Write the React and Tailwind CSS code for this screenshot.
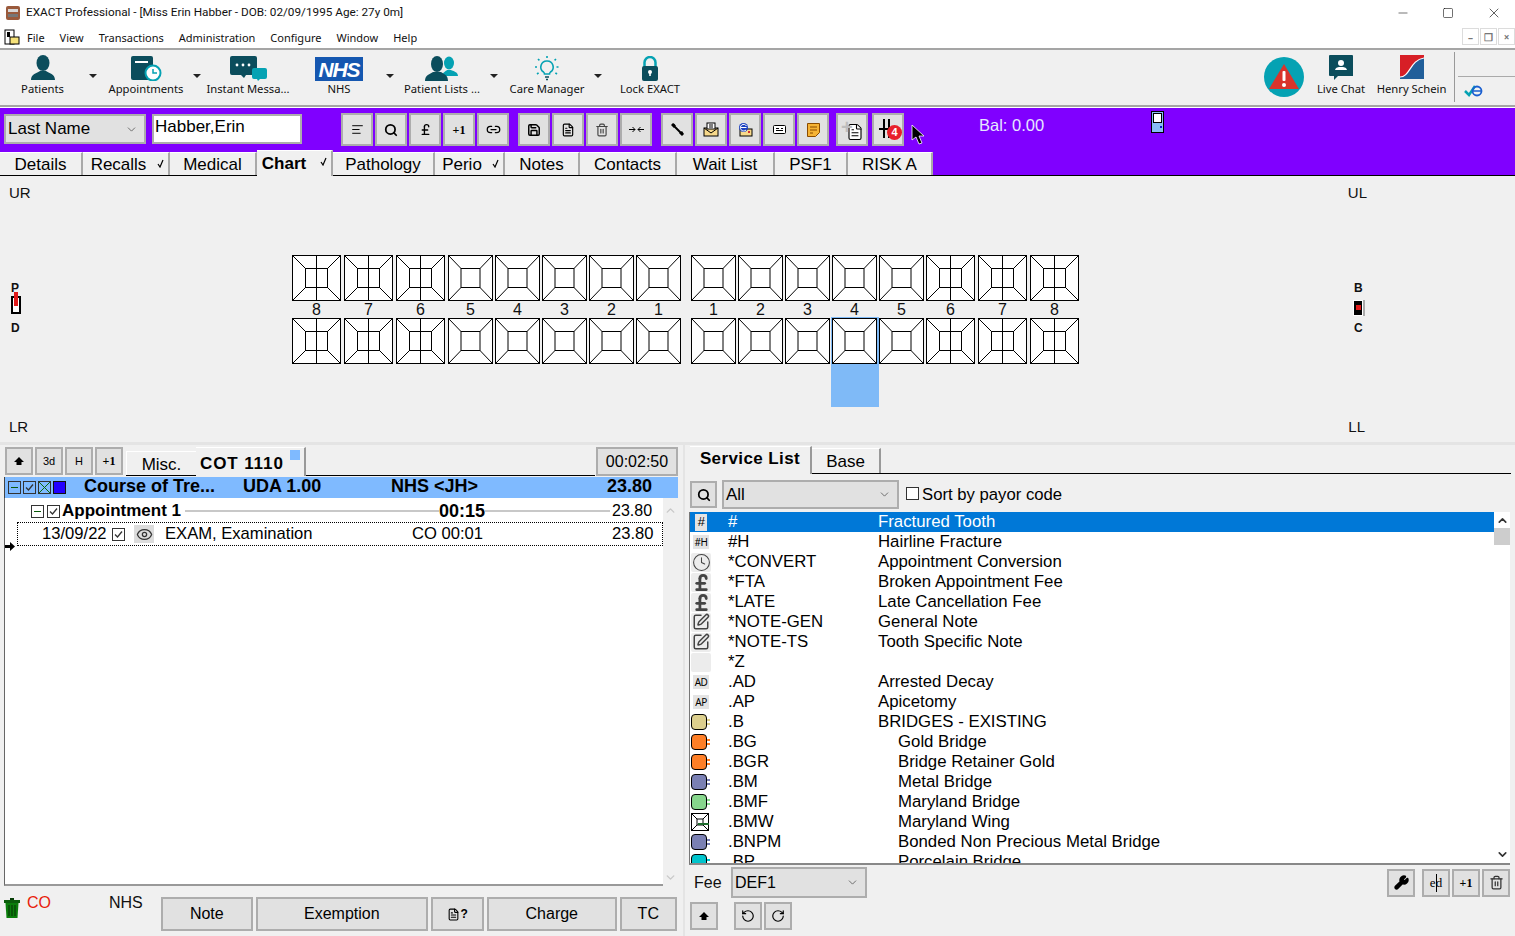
import React from 'react';
import { AlignLeft, Search, PoundSterling, Link2, Save, FileText, Trash2, Minus, Square, X, ChevronDown, ChevronUp, Clock, SquarePen, Eye, Wrench, RotateCcw, RotateCw } from 'lucide-react';

const UI = "font-['Noto_Sans',sans-serif]";
const AR = "font-['Liberation_Sans',Arial,sans-serif]";

const Btn = ({ className = '', children }) => (
  <div className={`flex items-center justify-center shrink-0 border-2 border-[#adadad] bg-[#e1e1e1] text-black ${className}`}>{children}</div>
);

const Caret = () => <div className="w-0 h-0 border-x-[4px] border-x-transparent border-t-[4px] border-t-[#222]" />;

const Select = ({ className = '', children }) => (
  <div className={`flex items-center justify-between border-2 border-[#adadad] bg-[#e1e1e1] pl-[2px] pr-1.5 text-black ${className}`}>
    <span>{children}</span>
    <ChevronDown size={13} strokeWidth={1.5} className="text-[#555]" />
  </div>
);

const Patient = () => (
  <svg width="26" height="26" viewBox="0 0 26 26" fill="#0b4d5c"><ellipse cx="13" cy="8" rx="6.5" ry="8" /><path d="M1 25c0-6 6-7 9-9h6c3 2 9 3 9 9z" /></svg>
);
const Appt = () => (
  <svg width="32" height="26" viewBox="0 0 32 26"><rect x="1" y="1" width="22" height="24" rx="2" fill="#0b4d5c" /><rect x="5" y="6" width="13" height="2" fill="#fff" /><circle cx="23" cy="18" r="7.5" fill="#fff" stroke="#05a2b3" strokeWidth="2" /><path d="M23 14v4h4" stroke="#05a2b3" strokeWidth="1.5" fill="none" /></svg>
);
const Chat = () => (
  <svg width="37" height="25" viewBox="0 0 37 25"><path d="M2 0h23a2 2 0 0 1 2 2v17H16l-2 3-3-3H2a2 2 0 0 1-2-2V2a2 2 0 0 1 2-2z" fill="#0b4d5c" /><circle cx="7" cy="9" r="1.4" fill="#fff" /><circle cx="13" cy="9" r="1.4" fill="#fff" /><circle cx="19" cy="9" r="1.4" fill="#fff" /><path d="M24 12h11a2 2 0 0 1 2 2v7a2 2 0 0 1-2 2h-5l-2 2-1-2h-3a2 2 0 0 1-2-2v-7a2 2 0 0 1 2-2z" fill="#05a2b3" /></svg>
);
const Nhs = () => (
  <div className="w-[48px] h-[24px] bg-[#1557b0] flex items-center justify-center text-white text-[21px] italic font-bold font-['Liberation_Sans',sans-serif] leading-none tracking-tighter">NHS</div>
);
const Lists = () => (
  <svg width="34" height="25" viewBox="0 0 34 25"><ellipse cx="24" cy="7" rx="5" ry="6.5" fill="#05a2b3" /><path d="M17 20c1-4 4-5 5-6h4c2 1 7 2 7 6z" fill="#05a2b3" /><ellipse cx="12" cy="8" rx="6" ry="8" fill="#0b4d5c" /><path d="M0 25c0-6 5-7 8-9h8c3 2 7 3 7 9z" fill="#0b4d5c" /></svg>
);
const Bulb = () => (
  <svg width="24" height="25" viewBox="0 0 24 25" fill="none" stroke="#05a2b3" strokeWidth="1.6"><path d="M12 5a6 6 0 0 0-3.500 11c.7.6 1 1.200 1 2h5c0-.8.3-1.400 1-2A6 6 0 0 0 12 5z" /><path d="M10 21h4M11 23.500h2" stroke="#0b4d5c" /><path d="M12 0v2.500M3 3l2 2M21 3l-2 2M0 11h2.500M21.500 11H24M2 18l2-1.500M22 18l-2-1.500" strokeDasharray="2 1" /></svg>
);
const Lock = () => (
  <svg width="16" height="25" viewBox="0 0 16 25"><path d="M2.500 11V6.500a5.500 5.500 0 0 1 11 0V11" fill="none" stroke="#05a2b3" strokeWidth="2.500" /><rect x="0" y="10" width="16" height="15" rx="2" fill="#0b4d5c" /><circle cx="8" cy="16" r="2" fill="#fff" /><rect x="7.200" y="16" width="1.600" height="4" fill="#fff" /></svg>
);

// small bar icons
const Handset = () => (
  <svg width="15" height="15" viewBox="0 0 15 15"><path d="M3 3l9 9" stroke="#000" strokeWidth="2" /><path d="M1 3l2-2 3 2-2 3zM9 11l3-2 2 3-2 2z" fill="#000" /><path d="M5 2l1 1M8 5l1 1M11 8l1 1" stroke="#fff" strokeWidth="0.600" /></svg>
);
const MailUp = () => (
  <svg width="16" height="15" viewBox="0 0 16 15"><rect x="1" y="6" width="14" height="8" fill="#f7d98b" stroke="#000" /><path d="M1 6l7 5 7-5" fill="none" stroke="#000" /><rect x="4" y="1" width="8" height="6" fill="#fff" stroke="#000" /><path d="M6 3h4M6 5h4" stroke="#000" /></svg>
);
const WebMail = () => (
  <svg width="16" height="15" viewBox="0 0 16 15"><rect x="3" y="7" width="12" height="7" fill="#f7d98b" stroke="#000" /><circle cx="6.500" cy="5.500" r="4.500" fill="#1a3fc0" /><path d="M3.500 5.500h6M9.500 4a3.300 3.300 0 1 0-.5 4" stroke="#fff" fill="none" /><rect x="11" y="9" width="2" height="2" fill="#d32f2f" /></svg>
);
const Card = () => (
  <svg width="13" height="9" viewBox="0 0 13 9" fill="#fff" stroke="#000"><rect x="0.500" y="0.500" width="12" height="8" rx="1" /><path d="M3 3.500h3M8 3.500h2M3 5.500h7" /></svg>
);
const Sticky = () => (
  <svg width="13" height="14" viewBox="0 0 13 14"><path d="M0.500 0.500h12v9l-4 4h-8z" fill="#f5b335" stroke="#8a4b00" /><path d="M3 4h7M3 7h7M3 10h3" stroke="#8a4b00" /></svg>
);
const Squeeze = () => (
  <svg width="15" height="7" viewBox="0 0 15 7" fill="none" stroke="#000"><path d="M0 3.500h6M3.500 1l2.500 2.500L3.500 6M15 3.500H9M11.500 1L9 3.500 11.500 6" /></svg>
);
const Bin = () => (
  <svg width="16" height="20" viewBox="0 0 16 20"><rect x="6" y="0" width="4" height="2" fill="#063d06" /><rect x="0" y="2" width="16" height="3" fill="#0a5d0a" /><path d="M1.500 5h13l-1 15h-11z" fill="#0a7d0a" /><path d="M5 7v11M8 7v11M11 7v11" stroke="#043004" /></svg>
);

const mainTools = [
  { label: 'Patients', w: 'w-[85px]', icon: <Patient />, gap: 'w-[16px]', arrow: true },
  { label: 'Appointments', w: 'w-[90px]', icon: <Appt />, gap: 'w-[12px]', arrow: true },
  { label: 'Instant Messa...', w: 'w-[90px]', icon: <Chat />, gap: 'w-0' },
  { label: 'NHS', w: 'w-[92px]', icon: <Nhs />, gap: 'w-[10px]', arrow: true },
  { label: 'Patient Lists ...', w: 'w-[94px]', icon: <Lists />, gap: 'w-[10px]', arrow: true },
  { label: 'Care Manager', w: 'w-[96px]', icon: <Bulb />, gap: 'w-[6px]', arrow: true },
  { label: 'Lock EXACT', w: 'w-[98px]', icon: <Lock />, gap: 'w-0' },
];

const ToolItem = ({ label, w, icon }) => (
  <div className={`${w} shrink-0 flex flex-col items-center`}>
    <div className="h-[26px] flex items-end">{icon}</div>
    <span className="text-[11.25px] leading-[16px] whitespace-nowrap text-[#111]">{label}</span>
  </div>
);

const purpleGroups = [
  { ml: 'ml-[39px]', items: [
    <AlignLeft size={13} strokeWidth={1.8} />,
    <Search size={14} strokeWidth={3} />,
    <PoundSterling size={13} strokeWidth={2.5} />,
    <span className="text-[12px] font-bold font-['Liberation_Serif',serif]">+1</span>,
    <Link2 size={15} strokeWidth={2} />,
  ] },
  { ml: 'ml-[9px]', items: [
    <Save size={14} strokeWidth={2.5} />,
    <FileText size={14} strokeWidth={2} />,
    <Trash2 size={14} strokeWidth={2} className="text-[#444]" />,
    <Squeeze />,
  ] },
  { ml: 'ml-[9px]', items: [<Handset />, <MailUp />, <WebMail />, <Card />, <Sticky />] },
];

const mainTabs = [
  { t: 'Details', w: 'w-[83px]' },
  { t: 'Recalls', w: 'w-[87px]', tick: true },
  { t: 'Medical', w: 'w-[87px]' },
  { t: 'Chart', w: 'w-[76px]', tick: true, active: true },
  { t: 'Pathology', w: 'w-[102px]' },
  { t: 'Perio', w: 'w-[70px]', tick: true },
  { t: 'Notes', w: 'w-[75px]' },
  { t: 'Contacts', w: 'w-[97px]' },
  { t: 'Wait List', w: 'w-[98px]' },
  { t: 'PSF1', w: 'w-[73px]' },
  { t: 'RISK A', w: 'w-[85px]' },
];

const Tick = () => (
  <svg width="7" height="9" viewBox="0 0 7 9" className="absolute right-[4px] top-[6px]" fill="none" stroke="#000" strokeWidth="1.2"><path d="M1 5l2 3 3-7" /></svg>
);

// one tooth: outer box, inner box, diagonals, and a centre line on the molars
const Tooth = ({ w, molar }) => {
  const h = 46;
  const iw = molar ? 22 : 19;
  const ih = 19;
  const x0 = (w - iw) / 2;
  const y0 = (h - ih) / 2;
  return (
    <svg width={w} height={h} viewBox={`0 0 ${w} ${h}`} className="block relative" fill="none" stroke="#000" strokeWidth="1">
      <rect x="0.500" y="0.500" width={w - 1} height={h - 1} fill="#fff" />
      <rect x={x0} y={y0} width={iw} height={ih} />
      <path d={`M1 1L${x0} ${y0}M${w - 1} 1L${x0 + iw} ${y0}M1 ${h - 1}L${x0} ${y0 + ih}M${w - 1} ${h - 1}L${x0 + iw} ${y0 + ih}`} />
      {molar && <path d={`M${w / 2} 0V${h}`} />}
    </svg>
  );
};

const teethCols = [
  { n: 8, w: 49, m: true, mr: 'mr-[3px]' }, { n: 7, w: 49, m: true, mr: 'mr-[3px]' }, { n: 6, w: 49, m: true, mr: 'mr-[3px]' },
  { n: 5, w: 45, mr: 'mr-[2px]' }, { n: 4, w: 45, mr: 'mr-[2px]' }, { n: 3, w: 45, mr: 'mr-[2px]' }, { n: 2, w: 45, mr: 'mr-[2px]' }, { n: 1, w: 45, mr: 'mr-[10px]' },
  { n: 1, w: 45, mr: 'mr-[2px]' }, { n: 2, w: 45, mr: 'mr-[2px]' }, { n: 3, w: 45, mr: 'mr-[2px]' }, { n: 4, w: 45, mr: 'mr-[2px]', sel: true }, { n: 5, w: 45, mr: 'mr-[2px]' },
  { n: 6, w: 49, m: true, mr: 'mr-[3px]' }, { n: 7, w: 49, m: true, mr: 'mr-[3px]' }, { n: 8, w: 49, m: true },
];

const CheckBox = ({ x, minus, className = '' }) => (
  <div className={`w-[13px] h-[13px] border border-[#333] flex items-center justify-center shrink-0 bg-transparent ${className}`}>
    {minus && <div className="w-[7px] h-px bg-[#0a5a0a]" />}
    {x && <svg width="11" height="11" viewBox="0 0 11 11" stroke="#0a6a0a" strokeWidth="1"><path d="M0 0L11 11M11 0L0 11" /></svg>}
    {!minus && !x && <svg width="9" height="9" viewBox="0 0 9 9" fill="none" stroke="#333" strokeWidth="1.300"><path d="M1 4.500l2.500 2.500L8 1.500" /></svg>}
  </div>
);

const Badge = ({ t }) => (
  <div className="w-[16px] h-[14px] ml-[2px] bg-[#e4e4e4] flex items-center justify-center text-[10px] font-['Noto_Sans',sans-serif] text-black leading-none tracking-[-0.5px]">{t}</div>
);
const Pill = ({ c, edge }) => (
  <div className="flex items-center">
    <div className={`w-[16px] h-[16px] rounded-[4px] border border-black ${c}`} />
    <div className="flex flex-col gap-[2px]"><div className={`w-[3px] h-[2px] ${edge}`} /><div className={`w-[3px] h-[2px] ${edge}`} /></div>
  </div>
);
const Gray = ({ children }) => (
  <div className="w-[20px] h-[19px] bg-[#ececec] flex items-center justify-center text-[#444] rounded-[2px]">{children}</div>
);

const services = [
  { code: '#', desc: 'Fractured Tooth', icon: <div className="w-[12px] h-[17px] ml-[4px] bg-[#e4e4e4] flex items-center justify-center text-[13px] text-black italic">#</div> },
  { code: '#H', desc: 'Hairline Fracture', icon: <Badge t="#H" /> },
  { code: '*CONVERT', desc: 'Appointment Conversion', icon: <Gray><Clock size={19} strokeWidth={1.3} /></Gray> },
  { code: '*FTA', desc: 'Broken Appointment Fee', icon: <Gray><PoundSterling size={19} strokeWidth={3.5} /></Gray> },
  { code: '*LATE', desc: 'Late Cancellation Fee', icon: <Gray><PoundSterling size={19} strokeWidth={3.5} /></Gray> },
  { code: '*NOTE-GEN', desc: 'General Note', icon: <Gray><SquarePen size={18} strokeWidth={2} /></Gray> },
  { code: '*NOTE-TS', desc: 'Tooth Specific Note', icon: <Gray><SquarePen size={18} strokeWidth={2} /></Gray> },
  { code: '*Z', desc: '', icon: <Gray /> },
  { code: '.AD', desc: 'Arrested Decay', icon: <Badge t="AD" /> },
  { code: '.AP', desc: 'Apicetomy', icon: <Badge t="AP" /> },
  { code: '.B', desc: 'BRIDGES - EXISTING', icon: <Pill c="bg-[#dccf8d]" edge="bg-[#dccf8d]" /> },
  { code: '.BG', desc: 'Gold Bridge', sub: true, icon: <Pill c="bg-[#ff7f27]" edge="bg-[#ff7f27]" /> },
  { code: '.BGR', desc: 'Bridge Retainer Gold', sub: true, icon: <Pill c="bg-[#ff7f27]" edge="bg-[#ff7f27]" /> },
  { code: '.BM', desc: 'Metal Bridge', sub: true, icon: <Pill c="bg-[#7a80b4]" edge="bg-[#7a80b4]" /> },
  { code: '.BMF', desc: 'Maryland Bridge', sub: true, icon: <Pill c="bg-[#86d68c]" edge="bg-[#86d68c]" /> },
  { code: '.BMW', desc: 'Maryland Wing', sub: true, icon: (
    <svg width="18" height="18" viewBox="0 0 18 18" fill="#fff" stroke="#000"><rect x="0.500" y="0.500" width="17" height="17" /><rect x="6" y="6" width="6" height="6" /><path d="M1 1l5 5M17 1l-5 5M1 17l5-5M17 17l-5-5" /><rect x="7" y="10" width="11" height="2" fill="#1d6b2c" stroke="none" /></svg>
  ) },
  { code: '.BNPM', desc: 'Bonded Non Precious Metal Bridge', sub: true, icon: <Pill c="bg-[#7a80b4]" edge="bg-[#7a80b4]" /> },
  { code: '.BP', desc: 'Porcelain Bridge', sub: true, icon: <Pill c="bg-[#00c4cc]" edge="bg-[#00c4cc]" /> },
];

const Up = () => <svg width="12" height="10" viewBox="0 0 12 10" fill="#000"><path d="M6 1l5 5H8.500v3h-5V6H1z" /></svg>;

export default function App() {
  return (
    <div className={`w-[1515px] h-[936px] overflow-hidden flex flex-col bg-[#f0f0f0] text-black ${AR}`}>
      {/* title bar */}
      <div className="h-[25px] bg-white flex items-center shrink-0 font-['Roboto',sans-serif] text-[11.75px] text-[#111]">
        <svg width="16" height="16" viewBox="0 0 16 16" className="ml-[5px] mr-[5px]"><rect x="1" y="1" width="14" height="14" rx="2" fill="#9a5a3c" /><rect x="3" y="4" width="10" height="3" fill="#d8d8d8" /><rect x="3" y="9" width="10" height="3" fill="#777" /></svg>
        <span className="pt-px">EXACT Professional - [Miss Erin Habber - DOB: 02/09/1995 Age: 27y 0m]</span>
        <div className="ml-auto flex items-center">
          <Minus size={14} strokeWidth={1} className="mr-[32px]" />
          <Square size={12} strokeWidth={1.2} className="mr-[32px]" />
          <X size={16} strokeWidth={1} className="mr-[13px]" />
        </div>
      </div>

      {/* menu bar */}
      <div className={`h-[23px] bg-white flex items-center shrink-0 text-[11px] text-[#111] ${UI}`}>
        <svg width="16" height="16" viewBox="0 0 16 16" className="ml-[4px] mr-[7px]"><rect x="1" y="1" width="9" height="14" fill="#fff" stroke="#000" /><rect x="3" y="3" width="3" height="5" fill="#000" /><rect x="6" y="8" width="9" height="7" fill="#f6e27a" stroke="#000" /></svg>
        <div className="flex gap-[15px] mt-[3px]">
          {['File', 'View', 'Transactions', 'Administration', 'Configure', 'Window', 'Help'].map((m) => <span key={m}>{m}</span>)}
        </div>
        <div className="ml-auto flex gap-px">
          {['–', '❐', '×'].map((g) => (
            <div key={g} className="w-[17px] h-[17px] border border-[#dcdcdc] flex items-center justify-center text-[10px] font-bold text-[#777] leading-none">{g}</div>
          ))}
        </div>
      </div>

      {/* main toolbar */}
      <div className={`h-[59px] shrink-0 border-y-2 border-[#a5a5a5] flex bg-[#f0f0f0] ${UI}`}>
        <div className="flex items-start pt-[5px]">
          {mainTools.map((it) => (
            <React.Fragment key={it.label}>
              <ToolItem {...it} />
              <div className={`${it.gap} flex justify-center mt-[19px]`}>{it.arrow && <Caret />}</div>
            </React.Fragment>
          ))}
        </div>
        <div className="ml-auto flex items-start pt-[5px]">
          <div className="w-[40px] h-[40px] rounded-full bg-[#05a2b3] flex items-center justify-center mr-[4px] mt-[2px]">
            <svg width="30" height="26" viewBox="0 0 30 26"><path d="M15 0l15 25H0z" fill="#d9342b" /><rect x="13.500" y="7" width="3" height="10" rx="1" fill="#fff" /><circle cx="15" cy="21" r="2" fill="#fff" /></svg>
          </div>
          <div className="flex flex-col items-center w-[66px]">
            <svg width="24" height="26" viewBox="0 0 24 26"><path d="M1 0h22a1 1 0 0 1 1 1v20H9l-4 4v-4H1a1 1 0 0 1-1-1V1a1 1 0 0 1 1-1z" fill="#0b4d5c" /><circle cx="12" cy="8" r="3" fill="#fff" /><path d="M6 15c1-3 3-3 6-3s5 0 6 3z" fill="#fff" /></svg>
            <span className="text-[11.25px] leading-[16px] text-[#111]">Live Chat</span>
          </div>
          <div className="flex flex-col items-center w-[75px]">
            <svg width="24" height="24" viewBox="0 0 24 24" className="mb-[2px]"><rect width="24" height="24" fill="#d71f26" /><path d="M0 24V22C10 22 10 5 24 3V24z" fill="#215f9a" /><path d="M0 22C10 22 10 5 24 3" stroke="#fff" strokeWidth="1.200" fill="none" /></svg>
            <span className="text-[11.25px] leading-[16px] text-[#111] whitespace-nowrap">Henry Schein</span>
          </div>
          <div className="w-px h-[50px] bg-[#999] ml-[5px] -mt-[3px]" />
          <div className="w-[57px] h-[50px] -mt-[3px] ml-[3px] flex flex-col">
            <div className="h-[25px] border-b border-[#aaa]" />
            <div className="pl-[6px] pt-[6px] flex items-center">
              <svg width="20" height="14" viewBox="0 0 20 14" fill="none"><path d="M1 8l4 4 6-9" stroke="#05a2b3" strokeWidth="2.500" /><circle cx="13" cy="8" r="4.500" stroke="#1a5fd0" strokeWidth="1.800" /><path d="M8 8h9" stroke="#1a5fd0" strokeWidth="1.500" /></svg>
            </div>
          </div>
        </div>
      </div>

      {/* purple patient bar */}
      <div className="h-[69px] shrink-0 border-t border-white bg-[#8000ff] flex flex-col justify-between relative">
        <div className="flex items-start pl-[4px] pt-[5px]">
          <Select className="w-[142px] h-[30px] text-[17px] mt-px">Last Name</Select>
          <div className="w-[150px] h-[30px] ml-[6px] mt-px bg-white border-2 border-[#adadad] px-px text-[17px] leading-[22px] text-black">Habber,Erin</div>
          {purpleGroups.map((g, i) => (
            <div key={i} className={`flex gap-[2px] ${g.ml}`}>
              {g.items.map((ic, j) => (
                <Btn key={j} className={`w-[32px] h-[33px] ${i === 0 && j === 4 ? 'bg-[#cce8f7] border-[#00a2e8]' : ''}`}>{ic}</Btn>
              ))}
            </div>
          ))}
          <Btn className="w-[32px] h-[33px] ml-[7px] relative">
            <FileText size={18} strokeWidth={1.5} fill="#fff" className="ml-[5px] mt-[4px]" />
            <div className="absolute left-[3px] top-[2px] text-[#bdbdbd] text-[20px] font-bold leading-none">+</div>
          </Btn>
          <Btn className="w-[32px] h-[33px] ml-[4px] relative">
            <div className="w-[17px] h-[2px] bg-black absolute left-[5px] top-[13px]" />
            <div className="w-[2px] h-[19px] bg-black absolute left-[9px] top-[4px]" />
            <div className="w-[2px] h-[19px] bg-black absolute left-[14px] top-[4px]" />
            <div className="absolute left-[13px] top-[10px] w-[15px] h-[15px] rounded-full bg-[#e8202a] text-white text-[11px] font-bold flex items-center justify-center">4</div>
          </Btn>
          <span className="ml-[75px] text-[16.500px] text-[#e6e6ff] whitespace-nowrap">Bal: 0.00</span>
          <div className="ml-[107px] -mt-[2px] w-[13px] h-[22px] bg-[#86bdf5] border border-black relative">
            <div className="w-[9px] h-[10px] bg-white border border-black mx-auto mt-px" />
            <div className="absolute right-px bottom-[4px] w-[2px] h-[2px] bg-[#1010d0]" />
          </div>
        </div>
        <svg width="14" height="21" viewBox="0 0 14 21" className="absolute left-[911px] top-[17px]"><path d="M1 0v15l4-3 3 7 3-1-3-7h5z" fill="#000" stroke="#fff" strokeWidth="0.800" /></svg>

        {/* tabs */}
        <div className="flex items-end h-[25px] border-b border-black">
          <div className="flex items-end">
            {mainTabs.map((t) => (
              <div
                key={t.t}
                className={`${t.w} relative shrink-0 flex items-center justify-center text-[17px] border-r-2 border-[#a9a9a9] bg-[#f0f0f0] border-t border-t-white ${t.active ? 'h-[26px] font-bold pr-[20px] -mb-px' : 'h-[23px] pt-[2px]'} ${t.tick && !t.active ? 'pr-[14px]' : ''}`}
              >
                {t.t}
                {t.tick && <Tick />}
              </div>
            ))}
          </div>
        </div>
      </div>

      {/* chart area */}
      <div className="h-[266px] shrink-0 flex flex-col text-[#111] text-[15px] relative">
        <div className="flex justify-between pl-[9px] pt-[6px] h-[79px]">
          <span>UR</span>
          <span className="mr-[148px]">UL</span>
        </div>
        <div className="flex items-start h-[161px]">
          <div className="w-[292px] pl-[11px] pt-[26px] text-[12px] font-bold leading-[14px] shrink-0">
            <div>P</div>
            <div className="w-[10px] h-[18px] bg-white border-2 border-black my-px relative">
              <div className="absolute left-px -top-[6px] w-[4px] h-[14px] bg-[#e11a1a]" />
            </div>
            <div className="mt-[7px]">D</div>
          </div>
          <div className="flex">
            {teethCols.map((c, i) => (
              <div key={i} className={`flex flex-col items-center relative ${c.mr || ''}`} style={{ width: c.w }}>
                {c.sel && <div className="absolute -left-px top-[62px] w-[48px] h-[90px] bg-[#7fbaf7]" />}
                <Tooth w={c.w} molar={c.m} />
                <div className="h-[17px] text-[16px] leading-[17px] relative">{c.n}</div>
                <Tooth w={c.w} molar={c.m} />
              </div>
            ))}
          </div>
          <div className="ml-[274px] pt-[26px] text-[12px] font-bold leading-[14px]">
            <div className="pl-px">B</div>
            <div className="w-[10px] h-[16px] bg-black border border-white my-[5px] relative shadow-[2px_0_0_#aaa]">
              <div className="absolute left-[2px] top-[4px] w-[5px] h-[5px] bg-[#e11a1a]" />
            </div>
            <div className="pl-px">C</div>
          </div>
        </div>
        <div className="flex justify-between pl-[9px]">
          <span>LR</span>
          <span className="mr-[150px]">LL</span>
        </div>
      </div>

      {/* lower panes */}
      <div className="flex-1 flex min-h-0 border-t-[3px] border-[#e4e4e4]">
        {/* left pane */}
        <div className="w-[683px] shrink-0 flex flex-col">
          <div className="h-[32px] pt-[2px] flex items-start pl-[5px] shrink-0">
            <div className="flex gap-[2px] items-start">
              <Btn className="w-[28px] h-[28px]"><Up /></Btn>
              <Btn className="w-[28px] h-[28px] text-[11px]">3d</Btn>
              <Btn className="w-[28px] h-[28px] text-[11px]">H</Btn>
              <Btn className="w-[28px] h-[28px] text-[12px] font-bold font-['Liberation_Serif',serif]">+1</Btn>
            </div>
            <div className="ml-[3px] h-[29px] w-[469px] border-b border-black flex items-end">
              <div className="w-[70px] h-[24px] border-t border-l border-white text-[17px] flex items-center justify-center pt-[2px]">Misc.</div>
              <div className="w-[110px] h-[29px] -mb-px bg-[#f0f0f0] border-t border-white border-r-2 border-r-[#999] pl-[4px] flex items-start pt-[3px] font-bold text-[17px] tracking-[0.9px] relative">
                COT 1110
                <div className="w-[10px] h-[10px] bg-[#7fbaff] ml-[6px] mt-[-1px]" />
              </div>
            </div>
            <Btn className="w-[82px] h-[29px] ml-px text-[16px] text-[#111]">00:02:50</Btn>
          </div>
          <div className="ml-[4px] w-[674px] flex-1 min-h-0 flex flex-col">
            <div className="h-[21px] shrink-0 bg-[#7fbaff] border-l border-[#444] flex items-center text-[18px] font-bold pb-[2px]">
              <div className="flex items-center gap-[2px] pl-[3px] pt-[2px]">
                <CheckBox minus />
                <CheckBox />
                <CheckBox x />
                <div className="w-[13px] h-[13px] bg-[#2200ff] border border-[#111]" />
              </div>
              <span className="ml-[18px] w-[159px] whitespace-nowrap">Course of Tre...</span>
              <span className="w-[148px]">UDA 1.00</span>
              <span className="w-[216px]">NHS &lt;JH&gt;</span>
              <span>23.80</span>
            </div>
            <div className="flex-1 min-h-0 flex">
              <div className="w-[659px] bg-white border-l border-b-2 border-[#666] border-b-[#999] relative">
                <div className="h-[24px] flex items-center relative pt-[2px]">
                  <CheckBox minus className="ml-[26px]" />
                  <CheckBox className="ml-[3px]" />
                  <span className="ml-[2px] text-[17px] font-bold">Appointment 1</span>
                  <div className="ml-[4px] w-[254px] h-[2px] bg-[#c8c8c8]" />
                  <span className="text-[18px] font-bold w-[46px]">00:15</span>
                  <div className="w-[125px] h-[2px] bg-[#c8c8c8]" />
                  <span className="ml-[2px] text-[16px]">23.80</span>
                </div>
                <div className="ml-[12px] w-[646px] h-[24px] border border-dotted border-black flex items-center text-[16.600px]">
                  <span className="ml-[24px] w-[70px]">13/09/22</span>
                  <CheckBox />
                  <div className="ml-[9px] w-[20px] h-[18px] bg-[#dcdcdc] flex items-center justify-center"><Eye size={17} strokeWidth={1.8} className="text-[#333]" /></div>
                  <span className="ml-[11px] w-[247px]">EXAM, Examination</span>
                  <span className="w-[200px]">CO 00:01</span>
                  <span>23.80</span>
                </div>
                <svg width="10" height="9" viewBox="0 0 10 9" className="absolute left-0 top-[44px]"><path d="M0 3h5V0l5 4.500L5 9V6H0z" fill="#000" /></svg>
              </div>
              <div className="w-[15px] flex flex-col justify-between items-center text-[#c8c8c8] pb-[2px]">
                <ChevronUp size={13} strokeWidth={2.5} className="mt-[6px]" />
                <ChevronDown size={13} strokeWidth={2.5} />
              </div>
            </div>
          </div>
          <div className="h-[50px] shrink-0 flex items-start pt-[11px]">
            <div className="ml-[4px] mt-px shrink-0"><Bin /></div>
            <span className="ml-[7px] text-[16px] text-[#e8200a] leading-[14px] mt-[-1px]">CO</span>
            <span className="ml-[58px] text-[16px] text-[#111] leading-[14px] mt-[-1px]">NHS</span>
            <div className="ml-[18px] flex gap-[3px] text-[16px] text-[#111]">
              <Btn className="w-[92px] h-[34px]">Note</Btn>
              <Btn className="w-[172px] h-[34px]">Exemption</Btn>
              <Btn className="w-[53px] h-[34px] gap-px"><FileText size={13} strokeWidth={2} /><span className="font-bold text-[12px]">?</span></Btn>
              <Btn className="w-[130px] h-[34px]">Charge</Btn>
              <Btn className="w-[57px] h-[34px]">TC</Btn>
            </div>
          </div>
        </div>

        {/* right pane */}
        <div className="flex-1 flex flex-col pl-[5px] pr-[5px] min-w-0 border-l-2 border-[#e4e4e4]">
          <div className="h-[29px] shrink-0 flex items-end border-b border-black -mr-px">
            <div className="w-[122px] h-[28px] -mb-px bg-[#f0f0f0] border-t border-white border-r-2 border-r-[#999] flex items-center justify-center pb-[3px] text-[17px] font-bold tracking-[0.4px]">Service List</div>
            <div className="w-[69px] h-[25px] border-r-2 border-[#999] border-t border-t-white flex items-center justify-center text-[17px] pt-px">Base</div>
          </div>
          <div className="h-[35px] shrink-0 flex items-center mt-[3px]">
            <Btn className="w-[27px] h-[27px]"><Search size={14} strokeWidth={3} /></Btn>
            <Select className="w-[177px] h-[29px] ml-[5px] text-[17px]">All</Select>
            <div className="w-[13px] h-[13px] border border-[#333] bg-white ml-[7px] mb-[2px]" />
            <span className="ml-[3px] text-[16.700px]">Sort by payor code</span>
          </div>
          <div className="h-[353px] shrink-0 bg-white border-l border-b-2 border-[#777] border-b-[#888] flex overflow-hidden -ml-px">
            <div className="flex-1 min-w-0 overflow-hidden">
              {services.map((s, i) => (
                <div key={s.code} className={`h-[20px] flex items-center text-[16.800px] whitespace-nowrap ${i === 0 ? 'bg-[#0078d7] text-white' : ''}`}>
                  <div className="w-[38px] shrink-0 flex justify-start pl-px">{s.icon}</div>
                  <span className="w-[150px] shrink-0">{s.code}</span>
                  <span className={s.sub ? 'ml-[20px]' : ''}>{s.desc}</span>
                </div>
              ))}
            </div>
            <div className="w-[16px] shrink-0 flex flex-col items-center justify-between bg-white">
              <div className="flex flex-col items-center w-full">
                <ChevronUp size={13} strokeWidth={3} className="mt-[2px] text-[#333]" />
                <div className="w-full h-[17px] bg-[#cdcdcd] mt-px" />
              </div>
              <ChevronDown size={13} strokeWidth={3} className="mb-[2px] text-[#333]" />
            </div>
          </div>
          <div className="h-[35px] shrink-0 flex items-center text-[16px] text-[#111]">
            <span className="w-[41px] pl-[4px]">Fee</span>
            <Select className="w-[136px] h-[31px] text-[16px]">DEF1</Select>
            <div className="ml-auto flex items-center">
              <Btn className="w-[28px] h-[28px] mr-[7px]"><Wrench size={15} strokeWidth={3} fill="#000" /></Btn>
              <div className="flex gap-[2px]">
                <Btn className="w-[28px] h-[28px] text-[13px] font-['Liberation_Serif',serif] relative">ed<div className="absolute left-[12px] top-[3px] w-px h-[18px] bg-black" /></Btn>
                <Btn className="w-[28px] h-[28px] text-[12px] font-bold font-['Liberation_Serif',serif]">+1</Btn>
                <Btn className="w-[28px] h-[28px]"><Trash2 size={15} strokeWidth={2} className="text-[#333]" /></Btn>
              </div>
            </div>
          </div>
          <div className="flex items-center mt-[2px]">
            <Btn className="w-[28px] h-[28px]"><Up /></Btn>
            <Btn className="w-[28px] h-[28px] ml-[16px]"><RotateCcw size={14} strokeWidth={2} /></Btn>
            <Btn className="w-[28px] h-[28px] ml-[2px]"><RotateCw size={14} strokeWidth={2} /></Btn>
          </div>
        </div>
      </div>
    </div>
  );
}
